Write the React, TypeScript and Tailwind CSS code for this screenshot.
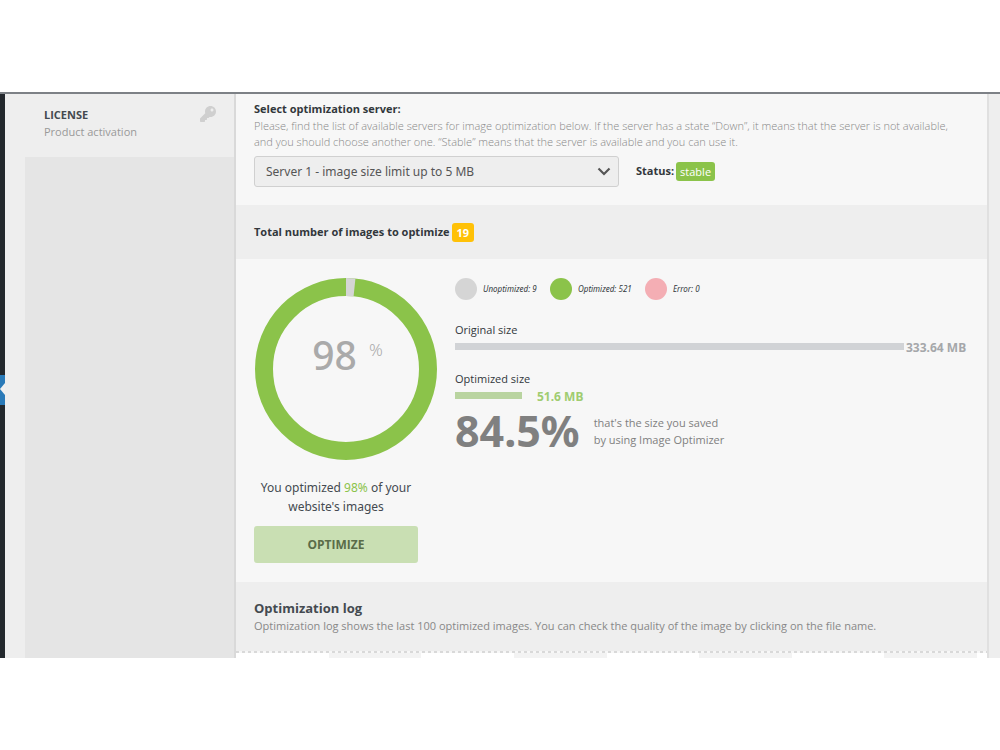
import { FaKey } from "react-icons/fa";

const legend = [
  { label: "Unoptimized: 9", dot: "bg-[#d5d5d5]" },
  { label: "Optimized: 521", dot: "bg-[#8bc34a]" },
  { label: "Error: 0", dot: "bg-[#f4aeb4]" },
];

function AdminMenuEdge() {
  return (
    <div className="flex w-[5px] shrink-0 flex-col bg-[#23282d]">
      <div className="h-[281px]" />
      <svg className="block h-[30px] w-[5px] bg-[#2a7ab8]" viewBox="0 0 5 30" aria-hidden="true">
        <path d="M5 8 L0 14 L5 20 Z" fill="#f0f0f0" />
      </svg>
    </div>
  );
}

function Sidebar() {
  return (
    <aside className="ml-5 flex w-[211px] shrink-0 flex-col border-r-2 border-[#d9d9d9] bg-[#e5e5e5]">
      <a href="#license" className="flex h-[63px] justify-between bg-[#eeeeee] pt-3 pr-[18px] pl-[19px]">
        <span className="block">
          <span className="block text-[11px] leading-[18px] font-bold text-[#444a50]">LICENSE</span>
          <span className="block text-[11px] leading-4 text-[#999999]">Product activation</span>
        </span>
        <FaKey className="size-4 text-[#cfcfcf]" />
      </a>
    </aside>
  );
}

function ServerSection() {
  return (
    <section className="px-[18px] pt-[7px] pb-[18px]">
      <label htmlFor="server" className="block text-[11px] leading-4 font-bold text-[#32373c]">
        Select optimization server:
      </label>
      <p className="mt-px text-[11px] leading-4 font-light text-[#888888]">
        Please, find the list of available servers for image optimization below. If the server has a state “Down”, it
        means that the server is not available, <br />
        and you should choose another one. “Stable” means that the server is available and you can use it.
      </p>
      <div className="mt-[6px] flex items-center">
        <div className="relative w-[365px]">
          <select
            id="server"
            className="h-[31px] w-full appearance-none rounded-[3px] border border-[#d0d0d0] bg-[#eeeeee] pr-8 pl-[11px] font-['Noto_Sans',sans-serif] text-[12px] text-[#555555]"
          >
            <option>Server 1 - image size limit up to 5 MB</option>
          </select>
          <svg
            className="pointer-events-none absolute top-[11px] right-2 h-[9px] w-[14px]"
            viewBox="0 0 14 9"
            fill="none"
            stroke="#555"
            strokeWidth="2.2"
            aria-hidden="true"
          >
            <path d="M1.5 1.5 L7 7 L12.5 1.5" />
          </svg>
        </div>
        <span className="ml-[17px] text-[11px] font-bold text-[#32373c]">Status:</span>
        <span className="ml-[2px] rounded-[3px] bg-[#8bc34a] px-1 text-[11px] leading-[19px] text-white">stable</span>
      </div>
    </section>
  );
}

function ProgressRing() {
  return (
    <div className="grid size-[183px] place-items-center">
      <svg className="col-start-1 row-start-1 size-[183px]" viewBox="0 0 183 183" fill="none" aria-hidden="true">
        <circle cx="92" cy="91" r="82" stroke="#8bc34a" strokeWidth="18" />
        <path d="M92 9 A82 82 0 0 1 100.5 9.44" stroke="#d5d5d5" strokeWidth="18" />
      </svg>
      <p className="col-start-1 row-start-1 mb-[30px] ml-1 flex font-['Noto_Sans',sans-serif] text-[#aaaaaa]">
        <span className="text-[39px] leading-[50px] font-medium">98</span>
        <span className="mt-[10px] ml-3 text-[17px] leading-5 font-light">%</span>
      </p>
    </div>
  );
}

function Statistics() {
  return (
    <section className="flex px-[18px] pt-[19px] pb-[19px]">
      <div className="w-[201px] shrink-0">
        <ProgressRing />
        <div className="mt-[17px] w-[164px] text-center">
          <p className="font-['Noto_Sans',sans-serif] text-[12px] leading-[19px] text-[#444a50]">
            You optimized <span className="text-[#8bc34a]">98%</span> of your website's images
          </p>
          <button
            type="button"
            className="mt-[10px] h-[37px] w-full rounded-[3px] bg-[#c9dfb3] text-[12px] font-bold text-[#5a6c48]"
          >
            OPTIMIZE
          </button>
        </div>
      </div>
      <div className="min-w-0 grow">
        <ul className="flex h-[22px] items-center">
          {legend.map((item) => (
            <li
              key={item.label}
              className="flex w-[95px] items-center gap-[6px] font-['Noto_Sans',sans-serif] text-[8px] whitespace-nowrap text-[#32373c] italic"
            >
              <span className={`size-[22px] shrink-0 rounded-full ${item.dot}`} />
              {item.label}
            </li>
          ))}
        </ul>
        <p className="mt-[22px] text-[11px] leading-4 text-[#32373c]">Original size</p>
        <div className="mt-[2px] flex h-4 items-center gap-[2px]">
          <div className="mb-[4px] h-[7px] grow bg-[#d1d3d6]" />
          <span className="w-[63px] font-['Noto_Sans',sans-serif] text-[12px] leading-4 font-bold whitespace-nowrap text-[#a5a7aa]">
            333.64 MB
          </span>
        </div>
        <p className="mt-[15px] text-[11px] leading-4 text-[#32373c]">Optimized size</p>
        <div className="mt-[2px] flex h-4 items-center gap-[15px]">
          <div className="mb-[4px] h-[7px] w-[67px] bg-[#b9d4a0]" />
          <span className="font-['Noto_Sans',sans-serif] text-[12px] leading-4 font-bold text-[#a0cc70]">51.6 MB</span>
        </div>
        <div className="mt-px flex items-center gap-[14px]">
          <strong className="font-['Noto_Sans',sans-serif] text-[43px] leading-[50px] font-bold text-[#808080]">
            84.5%
          </strong>
          <p className="text-[11px] leading-[17px] text-[#808080]">
            that's the size you saved
            <br />
            by using Image Optimizer
          </p>
        </div>
      </div>
    </section>
  );
}

function LogSection() {
  return (
    <section className="flex grow flex-col bg-[#eeeeee] pt-[17px]">
      <div className="px-[18px]">
        <h2 className="text-[13px] leading-[18px] font-bold text-[#444a50]">Optimization log</h2>
        <p className="text-[11px] leading-[18px] text-[#888888]">
          Optimization log shows the last 100 optimized images. You can check the quality of the image by clicking on
          the file name.
        </p>
      </div>
      <svg className="mt-4 block h-[2px] w-full bg-[#f7f7f7]" aria-hidden="true">
        <line x1="0" y1="1" x2="100%" y2="1" stroke="#d9d9d9" strokeWidth="2" strokeDasharray="3 3" />
      </svg>
      <div className="flex grow bg-white pr-[10px]">
        <div className="grow" />
        <div className="grow bg-[#f3f3f3]" />
        <div className="grow" />
        <div className="grow bg-[#f3f3f3]" />
        <div className="grow" />
        <div className="grow bg-[#f3f3f3]" />
        <div className="grow" />
        <div className="grow bg-[#f3f3f3]" />
      </div>
    </section>
  );
}

export default function App() {
  return (
    <div className="min-h-screen bg-white py-[92px] font-['Open_Sans','Noto_Sans',sans-serif]">
      <div className="flex min-h-[566px] border-t-2 border-[#7d8186] bg-[#eeeeee]">
        <AdminMenuEdge />
        <Sidebar />
        <main className="mr-[11px] flex min-w-0 grow flex-col border-r-2 border-[#e0e0e0] bg-[#f7f7f7]">
          <ServerSection />
          <section className="flex h-[54px] items-center bg-[#eeeeee] px-[18px] text-[11px] font-bold">
            <h2 className="text-[#32373c]">Total number of images to optimize</h2>
            <span className="ml-[2px] rounded-[3px] bg-[#ffc107] px-[5px] leading-[19px] text-white">19</span>
          </section>
          <Statistics />
          <LogSection />
        </main>
      </div>
    </div>
  );
}
